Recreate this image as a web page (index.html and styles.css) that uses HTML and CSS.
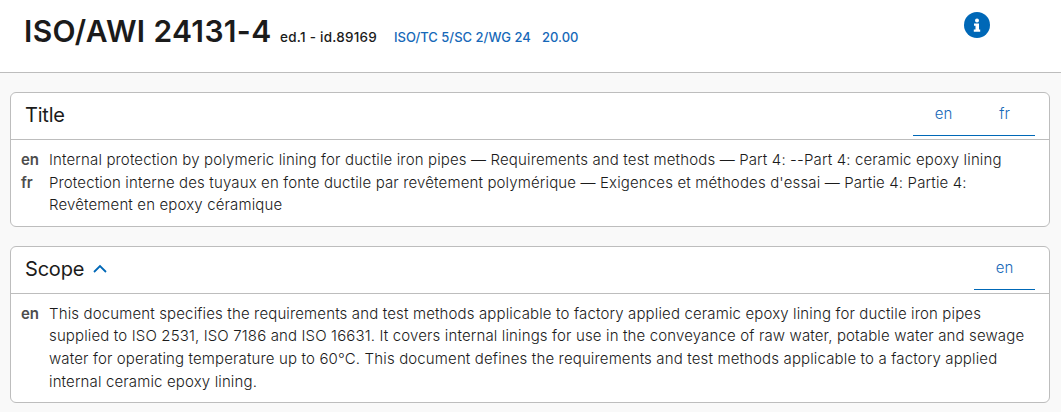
FILE: index.html
```html
<!DOCTYPE html>
<html lang="en">
<head>
    <meta charset="UTF-8">
    <meta name="viewport" content="width=device-width, initial-scale=1.0">
    <title>ISO/AWI 24131-4</title>
    <link rel="stylesheet" href="styles.css">
</head>
<body>
    <header class="header">
        <h1>ISO/AWI 24131-4</h1>
        <span class="edition">ed.1 - id.89169</span>
        <a class="committee" href="#">ISO/TC 5/SC 2/WG 24</a>
        <a class="stage" href="#">20.00</a>
        <a class="info" href="#" aria-label="Information">
            <svg width="26" height="26" viewBox="0 0 26 26"><circle cx="13" cy="13" r="13" fill="#0068b7"/><circle cx="13" cy="8.500" r="2" fill="#fff"/><path fill="#fff" d="M10 11.500h5v6h1.200v2.300h-6.400v-2.300h1.700v-3.700h-1.500z"/></svg>
        </a>
    </header>

    <main>
        <section class="card">
            <div class="card-header">
                <h2>Title</h2>
                <div class="tabs">
                    <a href="#">en</a>
                    <a href="#">fr</a>
                </div>
            </div>
            <div class="card-body">
                <div class="row">
                    <strong>en</strong>
                    <p>Internal protection by polymeric lining for ductile iron pipes — Requirements and test methods — Part 4: --Part 4: ceramic epoxy lining</p>
                </div>
                <div class="row">
                    <strong>fr</strong>
                    <p>Protection interne des tuyaux en fonte ductile par revêtement polymérique — Exigences et méthodes d'essai — Partie 4: Partie 4:<br>Revêtement en epoxy céramique</p>
                </div>
            </div>
        </section>

        <section class="card">
            <div class="card-header">
                <h2>Scope</h2>
                <svg class="chevron" width="14" height="9" viewBox="0 0 14 9"><path d="M1 8l6-6 6 6" fill="none" stroke="#0068b7" stroke-width="1.800"/></svg>
                <div class="tabs">
                    <a href="#">en</a>
                </div>
            </div>
            <div class="card-body">
                <div class="row">
                    <strong>en</strong>
                    <p>This document specifies the requirements and test methods applicable to factory applied ceramic epoxy lining for ductile iron pipes<br>supplied to ISO 2531, ISO 7186 and ISO 16631. It covers internal linings for use in the conveyance of raw water, potable water and sewage<br>water for operating temperature up to 60°C. This document defines the requirements and test methods applicable to a factory applied<br>internal ceramic epoxy lining.</p>
                </div>
            </div>
        </section>
    </main>
</body>
</html>
```

FILE: styles.css
```css
* { box-sizing: border-box; }
body { margin: 0; background-color: #f9f9f9; color: #1b1b1b; font-family: Inter, sans-serif; font-size: 15px; font-weight: 300; line-height: 22.6px; }
h1, h2, p { margin: 0; }
a { color: #1668b8; text-decoration: none; }

.header {
    display: flex;
    align-items: baseline;
    height: 73px;
    padding: 12px 71px 0 24px;
    background-color: #fff;
    border-bottom: 1px solid #bdbdbd;
    font-size: 13px;
    font-weight: 500;
    white-space: nowrap;
}
.header h1 { width: 246px; font-size: 30px; font-weight: 600; line-height: 39px; letter-spacing: 0.35px; }
.edition { width: 97px; margin-left: 10px; font-size: 13.5px; letter-spacing: 0.25px; }
.committee { width: 135px; margin-left: 17px; }
.stage { margin-left: 13px; }
.info { margin-left: auto; align-self: flex-start; height: 26px; }
.info svg { display: block; }

main { padding: 19px 11px 0 10px; }
.card {
    margin-bottom: 19px;
    background-color: #fff;
    border: 1px solid #bdbdbd;
    border-radius: 6px;
}
.card-header {
    display: flex;
    align-items: center;
    height: 47px;
    padding: 0 14px 2px;
    border-bottom: 1px solid #bdbdbd;
}
.card-header h2 { font-size: 20px; font-weight: 400; line-height: 24px; letter-spacing: -0.2px; }
.chevron { margin-left: 9px; }
.tabs { display: flex; margin-left: auto; border-bottom: 1px solid #0068b7; }
.tabs a { width: 61px; height: 41px; line-height: 40px; text-align: center; }

.card-body { padding: 9px 10px; }
.card-body .row:last-child { margin-bottom: 0.1px; }
.row { display: flex; }
.row strong { width: 28px; font-weight: 600; color: #4d4d4d; }
.row p { white-space: nowrap; letter-spacing: 0.14px; }
```
